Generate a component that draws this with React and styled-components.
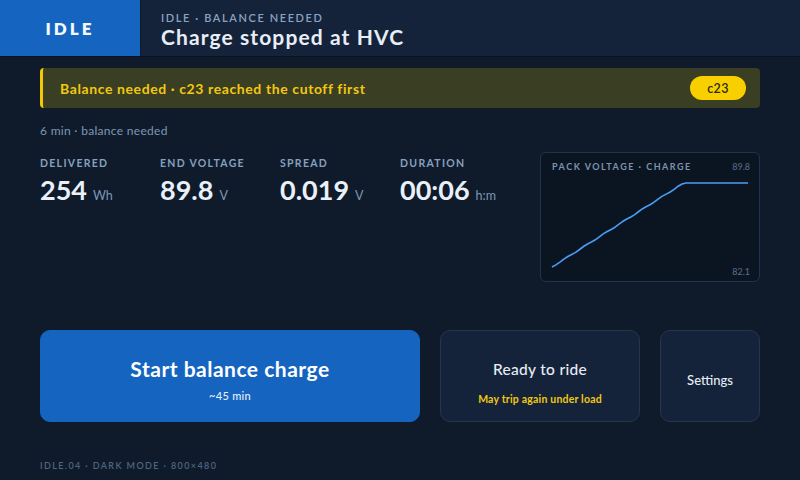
import React from 'react';
import styled, { createGlobalStyle } from 'styled-components';

const GlobalStyle = createGlobalStyle`
  html, body {
    margin: 0;
    padding: 0;
    background: #0f1b2b;
  }
  body {
    font-family: Lato, "Noto Sans", sans-serif;
    color: #e6edf5;
  }
`;

const Screen = styled.div`
  width: 800px;
  height: 480px;
  display: flex;
  flex-direction: column;
  background: #0f1b2b;
  overflow: hidden;
`;

const TopBar = styled.header`
  display: flex;
  height: 56px;
  background: #15233a;
  border-bottom: 1px solid #0a1420;
`;

const StateBlock = styled.div`
  width: 140px;
  display: flex;
  align-items: center;
  justify-content: center;
  background: #1565c0;
  border-right: 1px solid #0d1a2a;
  font-size: 17px;
  font-weight: 800;
  letter-spacing: 3px;
  color: #f4f8fc;
`;

const TitleWrap = styled.div`
  display: flex;
  flex-direction: column;
  justify-content: center;
  padding: 3px 0 0 20px;
  gap: 0;
`;

const Eyebrow = styled.div`
  font-size: 11px;
  font-weight: 600;
  letter-spacing: 1.6px;
  color: #8aa3c2;
`;

const Title = styled.div`
  font-size: 21px;
  font-weight: 700;
  color: #e8eef6;
  letter-spacing: 1.1px;
`;

const Body = styled.main`
  flex: 1;
  display: flex;
  flex-direction: column;
  padding: 11px 40px 0;
`;

const Banner = styled.div`
  height: 40px;
  display: flex;
  align-items: center;
  justify-content: space-between;
  padding: 0 14px 0 17px;
  background: #3a3e22;
  border-left: 3px solid #f5c800;
  border-radius: 4px;
  box-sizing: border-box;
`;

const BannerText = styled.span`
  font-size: 14px;
  font-weight: 700;
  letter-spacing: 0.6px;
  color: #f2c811;
`;

const Pill = styled.span`
  min-width: 56px;
  height: 24px;
  display: flex;
  align-items: center;
  justify-content: center;
  border-radius: 12px;
  background: #f8d000;
  color: #2a2a14;
  font-size: 12.5px;
  font-weight: 600;
  letter-spacing: 0.3px;
`;

const Note = styled.div`
  margin-top: 15px;
  font-size: 12px;
  letter-spacing: 0.3px;
  color: #7e97b5;
`;

const InfoRow = styled.div`
  display: flex;
  justify-content: space-between;
  margin-top: 14px;
`;

const Metrics = styled.div`
  display: grid;
  grid-template-columns: repeat(4, 120px);
  padding-top: 5px;
  align-content: start;
`;

const Metric = styled.div`
  display: flex;
  flex-direction: column;
  gap: 5px;
`;

const MetricLabel = styled.div`
  font-size: 10.5px;
  font-weight: 700;
  letter-spacing: 1.3px;
  color: #86a0bf;
`;

const MetricValue = styled.div`
  font-size: 27px;
  font-weight: 700;
  color: #eaf0f7;
  line-height: 32px;
`;

const Unit = styled.span`
  margin-left: 6px;
  font-size: 12.5px;
  font-weight: 400;
  color: #7e97b5;
`;

const ChartCard = styled.div`
  width: 220px;
  height: 130px;
  box-sizing: border-box;
  display: grid;
  grid-template-rows: auto 1fr auto;
  background: #0b1522;
  border: 1px solid #22324a;
  border-radius: 6px;
  overflow: hidden;
`;

const ChartHead = styled.div`
  grid-row: 1;
  grid-column: 1;
  display: flex;
  justify-content: space-between;
  padding: 8px 9px 0 11px;
`;

const ChartTitle = styled.span`
  font-size: 9px;
  font-weight: 700;
  letter-spacing: 1.5px;
  color: #7d93ae;
`;

const AxisValue = styled.span`
  font-size: 9px;
  color: #5a708b;
`;

const ChartFoot = styled.div`
  grid-row: 3;
  grid-column: 1;
  display: flex;
  justify-content: flex-end;
  padding: 0 9px 4px 0;
`;

const ChartSvg = styled.svg`
  grid-row: 1 / 4;
  grid-column: 1;
  width: 218px;
  height: 128px;
`;

const Actions = styled.div`
  display: flex;
  gap: 20px;
  margin-top: 48px;
  height: 92px;
`;

const ActionButton = styled.button`
  width: ${(p) => p.$w}px;
  display: flex;
  flex-direction: column;
  align-items: center;
  justify-content: center;
  gap: ${(p) => p.$gap || 0}px;
  border-radius: 10px;
  border: 1px solid ${(p) => (p.$primary ? '#1565c0' : '#26364e')};
  background: ${(p) => (p.$primary ? '#1565c0' : '#15233a')};
  font-family: inherit;
  cursor: pointer;
  padding: ${(p) => p.$pad || 8}px 0 0;
`;

const ActionTitle = styled.span`
  font-size: ${(p) => p.$size}px;
  font-weight: ${(p) => p.$weight || 500};
  letter-spacing: ${(p) => p.$spacing || 0}px;
  color: ${(p) => p.$color || '#e6edf5'};
`;

const ActionSub = styled.span`
  font-size: ${(p) => p.$size || 11}px;
  font-weight: ${(p) => p.$weight || 500};
  letter-spacing: ${(p) => p.$spacing || 0}px;
  color: ${(p) => p.$color || '#e6edf5'};
`;

const Footer = styled.footer`
  margin-top: auto;
  padding: 0 0 9px;
  font-size: 9px;
  font-weight: 600;
  letter-spacing: 1.4px;
  color: #4e6580;
`;

const metrics = [
  { label: 'DELIVERED', value: '254', unit: 'Wh' },
  { label: 'END VOLTAGE', value: '89.8', unit: 'V' },
  { label: 'SPREAD', value: '0.019', unit: 'V' },
  { label: 'DURATION', value: '00:06', unit: 'h:m' },
];

function buildLine() {
  const pts = [];
  const x0 = 11;
  const y0 = 114;
  const x1 = 141;
  const y1 = 31;
  for (let i = 0; i <= 33; i += 1) {
    const t = i / 33;
    const x = x0 + (x1 - x0) * t;
    const wobble = Math.sin(i * 1.3) * 0.45;
    const y = y0 + (y1 - y0) * t + (i > 0 && i < 33 ? wobble : 0);
    pts.push(`${x.toFixed(1)},${y.toFixed(1)}`);
  }
  pts.push('145,30');
  pts.push('207,30');
  return pts.join(' ');
}

function VoltageChart() {
  return (
    <ChartCard>
      <ChartSvg viewBox="0 0 218 128">
        <polyline
          points={buildLine()}
          fill="none"
          stroke="#4a9cf6"
          strokeWidth="1.6"
          strokeLinejoin="round"
        />
      </ChartSvg>
      <ChartHead>
        <ChartTitle>PACK VOLTAGE · CHARGE</ChartTitle>
        <AxisValue>89.8</AxisValue>
      </ChartHead>
      <ChartFoot>
        <AxisValue>82.1</AxisValue>
      </ChartFoot>
    </ChartCard>
  );
}

export default function App() {
  return (
    <Screen>
      <GlobalStyle />
      <TopBar>
        <StateBlock>IDLE</StateBlock>
        <TitleWrap>
          <Eyebrow>IDLE · BALANCE NEEDED</Eyebrow>
          <Title>Charge stopped at HVC</Title>
        </TitleWrap>
      </TopBar>

      <Body>
        <Banner>
          <BannerText>Balance needed · c23 reached the cutoff first</BannerText>
          <Pill>c23</Pill>
        </Banner>

        <Note>6 min · balance needed</Note>

        <InfoRow>
          <Metrics>
            {metrics.map((m) => (
              <Metric key={m.label}>
                <MetricLabel>{m.label}</MetricLabel>
                <MetricValue>
                  {m.value}
                  <Unit>{m.unit}</Unit>
                </MetricValue>
              </Metric>
            ))}
          </Metrics>
          <VoltageChart />
        </InfoRow>

        <Actions>
          <ActionButton $primary $w={380} $gap={8} $pad={6}>
            <ActionTitle $size={21} $weight={700} $spacing={0.5} $color="#ffffff">
              Start balance charge
            </ActionTitle>
            <ActionSub $color="#e8f0fb" $spacing={0.3}>~45 min</ActionSub>
          </ActionButton>
          <ActionButton $w={200} $gap={15} $pad={12}>
            <ActionTitle $size={15.5} $spacing={0.3}>Ready to ride</ActionTitle>
            <ActionSub $size={10.5} $weight={700} $spacing={0.2} $color="#f2c811">
              May trip again under load
            </ActionSub>
          </ActionButton>
          <ActionButton $w={100}>
            <ActionTitle $size={13}>Settings</ActionTitle>
          </ActionButton>
        </Actions>

        <Footer>IDLE.04 · DARK MODE · 800×480</Footer>
      </Body>
    </Screen>
  );
}
